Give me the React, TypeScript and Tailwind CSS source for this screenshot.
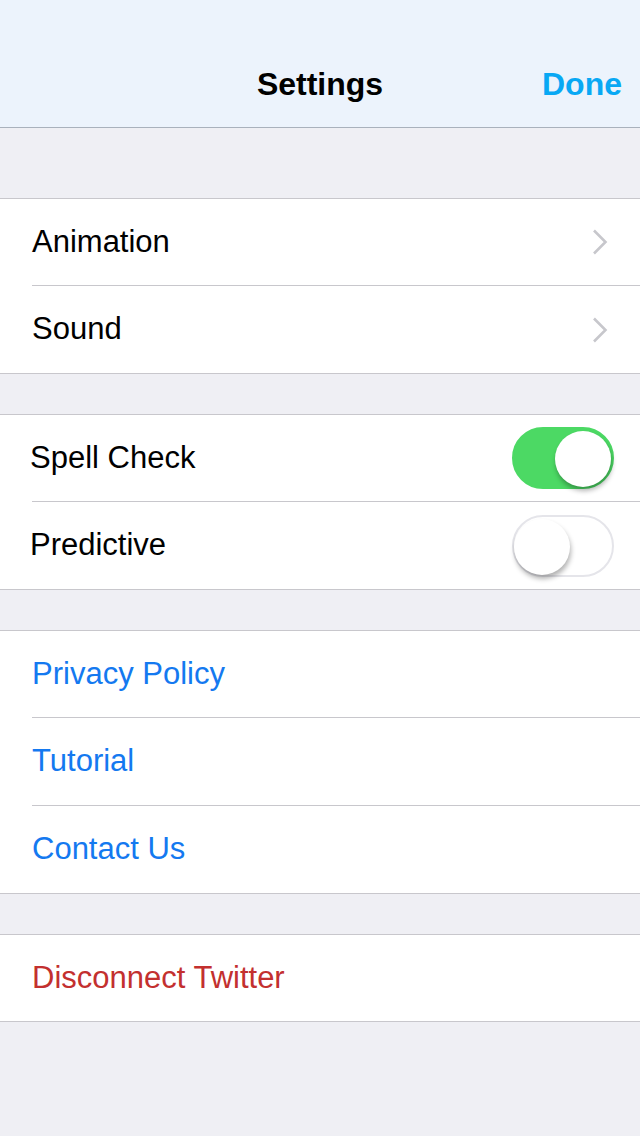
import { useState } from "react";

const Chevron = () => (
  <svg width="20" height="28" viewBox="0 0 20 28" className="mr-[30px]">
    <path d="M4 2.5 L15.5 14 L4 25.5" fill="none" stroke="#c7c7cc" strokeWidth="2.6" />
  </svg>
);

const Toggle = ({ on, onClick }: { on: boolean; onClick: () => void }) => (
  <button
    onClick={onClick}
    className={`relative w-[102px] h-[62px] rounded-full mr-[26px] border-2 ${
      on ? "bg-[#4cd964] border-[#4cd964]" : "bg-white border-[#e5e5ea]"
    }`}
  >
    <span
      className={`absolute top-[2px] w-[56px] h-[56px] rounded-full bg-white shadow-[1px_4px_5px_rgba(0,0,0,0.3)] ${
        on ? "left-[41px]" : "left-0"
      }`}
    />
  </button>
);

const Row = ({
  label,
  color = "text-black",
  first = false,
  inset = "pl-8",
  right,
}: {
  label: string;
  color?: string;
  first?: boolean;
  inset?: string;
  right?: React.ReactNode;
}) => (
  <div className={first ? "" : "pl-8"}>
    <div
      className={`flex items-center justify-between ${
        first ? `h-[86px] ${inset}` : "h-[88px] border-t border-[#c8c7cc]"
      }`}
    >
      <span className={`text-[31px] ${first ? "" : inset === "pl-8" ? "" : "-ml-[2px]"} ${color}`}>
        {label}
      </span>
      {right}
    </div>
  </div>
);

const Group = ({ children }: { children: React.ReactNode }) => (
  <div className="bg-white border-y border-[#c8c7cc]">{children}</div>
);

export default function App() {
  const [spell, setSpell] = useState(true);
  const [predictive, setPredictive] = useState(false);

  return (
    <div
      className="w-[640px] h-[1136px] bg-[#efeff4] flex flex-col"
      style={{ fontFamily: '"Liberation Sans", Arial, sans-serif' }}
    >
      <header className="h-[128px] bg-[#ecf3fc] border-b border-[#a9b1bc] flex items-end">
        <div className="h-[87px] w-full relative flex items-center justify-center">
          <h1 className="text-[32px] font-bold text-black">Settings</h1>
          <span className="absolute right-[18px] text-[32px] font-bold text-[#08a8f4]">Done</span>
        </div>
      </header>

      <div className="h-[70px] shrink-0" />
      <Group>
        <Row first label="Animation" right={<Chevron />} />
        <Row label="Sound" right={<Chevron />} />
      </Group>

      <div className="h-[40px] shrink-0" />
      <Group>
        <Row
          first
          inset="pl-[30px]"
          label="Spell Check"
          right={<Toggle on={spell} onClick={() => setSpell(!spell)} />}
        />
        <Row
          inset="pl-[30px]"
          label="Predictive"
          right={<Toggle on={predictive} onClick={() => setPredictive(!predictive)} />}
        />
      </Group>

      <div className="h-[40px] shrink-0" />
      <Group>
        <Row first label="Privacy Policy" color="text-[#1479f0]" />
        <Row label="Tutorial" color="text-[#1479f0]" />
        <Row label="Contact Us" color="text-[#1479f0]" />
      </Group>

      <div className="h-[40px] shrink-0" />
      <Group>
        <Row first label="Disconnect Twitter" color="text-[#c3302f]" />
      </Group>
    </div>
  );
}
